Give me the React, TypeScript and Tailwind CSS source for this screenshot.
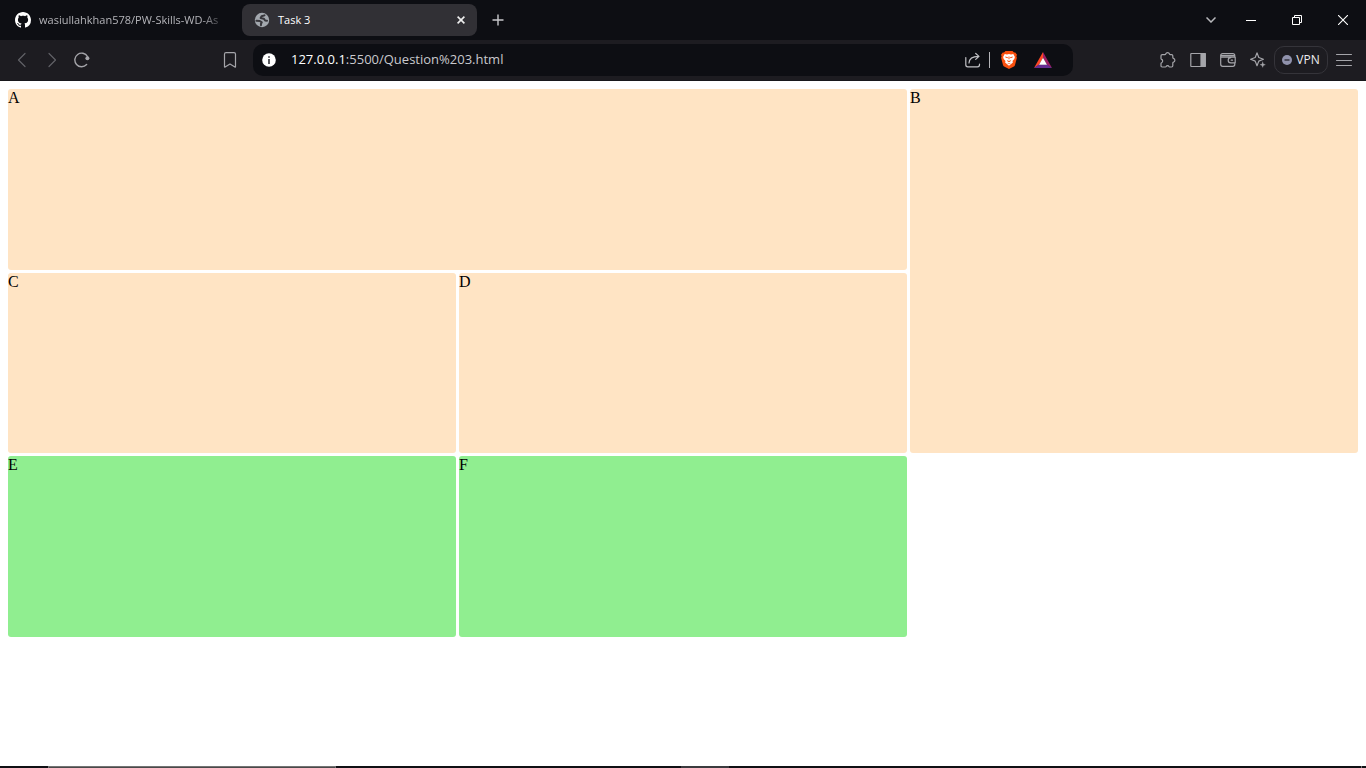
import React from "react";

const cells = [
  { name: "A", className: "col-span-2 bg-[#ffe4c4]" },
  { name: "B", className: "row-span-2 bg-[#ffe4c4]" },
  { name: "C", className: "bg-[#ffe4c4]" },
  { name: "D", className: "bg-[#ffe4c4]" },
  { name: "E", className: "bg-[#90ee90]" },
  { name: "F", className: "bg-[#90ee90]" },
];

function IconButton({
  label,
  className = "",
  children,
}: {
  label: string;
  className?: string;
  children: React.ReactNode;
}) {
  return (
    <button
      type="button"
      aria-label={label}
      className={`flex h-8 shrink-0 items-center justify-center ${className}`}
    >
      {children}
    </button>
  );
}

function Svg({
  size = 16,
  children,
}: {
  size?: number;
  children: React.ReactNode;
}) {
  return (
    <svg
      width={size}
      height={size}
      viewBox={`0 0 ${size} ${size}`}
      fill="none"
      stroke="currentColor"
      strokeWidth="1.2"
      strokeLinecap="round"
      strokeLinejoin="round"
      aria-hidden="true"
    >
      {children}
    </svg>
  );
}

function TabStrip() {
  return (
    <div className="flex h-10 items-center bg-[#0d0e13] text-[11px]">
      <a
        href="#repo"
        className="flex h-8 w-[242px] shrink-0 items-center gap-2 pr-[13px] pl-[15px] text-[#b4b4b9]"
      >
        <svg width="16" height="16" viewBox="0 0 16 16" fill="#fff" className="shrink-0" aria-hidden="true">
          <path d="M8 0C3.58 0 0 3.58 0 8c0 3.54 2.29 6.53 5.47 7.59.4.07.55-.17.55-.38 0-.19-.01-.82-.01-1.49-2.01.37-2.53-.49-2.69-.94-.09-.23-.48-.94-.82-1.13-.28-.15-.68-.52-.01-.53.63-.01 1.08.58 1.23.82.72 1.21 1.87.87 2.33.66.07-.52.28-.87.51-1.07-1.78-.2-3.64-.89-3.64-3.95 0-.87.31-1.59.82-2.15-.08-.2-.36-1.02.08-2.12 0 0 .67-.21 2.2.82.64-.18 1.32-.27 2-.27s1.36.09 2 .27c1.53-1.04 2.2-.82 2.2-.82.44 1.1.16 1.92.08 2.12.51.56.82 1.27.82 2.15 0 3.07-1.87 3.75-3.65 3.95.29.25.54.73.54 1.48 0 1.07-.01 1.93-.01 2.2 0 .21.15.46.55.38A8.01 8.01 0 0 0 16 8c0-4.42-3.58-8-8-8z" />
        </svg>
        <span className="min-w-0 flex-1 [mask-image:linear-gradient(to_right,#000_85%,transparent)] whitespace-nowrap">
          wasiullahkhan578/PW-Skills-WD-As
        </span>
      </a>
      <div className="flex h-8 w-[235px] shrink-0 items-center rounded-lg bg-[#313035] pr-2 pl-3 text-white">
        <svg width="16" height="16" viewBox="0 0 16 16" className="mr-2 shrink-0" aria-hidden="true">
          <circle cx="8" cy="8" r="7.200" fill="#a3a8ae" />
          <g fill="none" stroke="#38373c" strokeWidth="2" strokeLinecap="round" strokeLinejoin="round">
            <path d="M10.500 3.400 7.600 4.300 6.600 6l3.200.7 1.300 1.800 1.900.2" />
            <path d="m2.400 8.800 3.400.2 2 1.300-.9 1.600.1 1.300" />
          </g>
        </svg>
        <span className="flex-1">Task 3</span>
        <IconButton label="Close tab" className="w-4">
          <svg width="8" height="8" viewBox="0 0 8 8" stroke="#eee" strokeWidth="1.600" aria-hidden="true">
            <path d="M.6.600l6.800 6.800M7.400.600.600 7.400" />
          </svg>
        </IconButton>
      </div>
      <IconButton label="New tab" className="ml-[5px] w-8 text-[#c8c8cc]">
        <svg width="12" height="12" viewBox="0 0 12 12" stroke="currentColor" strokeWidth="1.400" aria-hidden="true">
          <path d="M6 .5v11M.5 6h11" />
        </svg>
      </IconButton>
      <div className="flex-1" />
      <IconButton label="Search tabs" className="w-[34px] text-[#b8b8bc]">
        <svg width="10" height="6" viewBox="0 0 10 6" fill="none" stroke="currentColor" strokeWidth="1.500" aria-hidden="true">
          <path d="M.5.5 5 5 9.500.5" />
        </svg>
      </IconButton>
      <div className="flex text-white">
        <IconButton label="Minimise" className="w-[46px]">
          <svg width="10" height="10" viewBox="0 0 10 10" stroke="currentColor" aria-hidden="true">
            <path d="M0 5.500h10" />
          </svg>
        </IconButton>
        <IconButton label="Restore" className="w-[46px]">
          <svg width="10" height="10" viewBox="0 0 10 10" fill="none" stroke="currentColor" aria-hidden="true">
            <path d="M.5 2.500h7v7h-7zM2.500 2.500v-2h7v7h-2" />
          </svg>
        </IconButton>
        <IconButton label="Close window" className="w-[46px]">
          <svg width="10" height="10" viewBox="0 0 10 10" stroke="currentColor" strokeWidth="1.100" aria-hidden="true">
            <path d="m0 0 10 10M10 0 0 10" />
          </svg>
        </IconButton>
      </div>
    </div>
  );
}

function AddressBar() {
  return (
    <div className="flex h-8 min-w-0 flex-1 items-center rounded-[10px] bg-[#0d0e13] pr-[21px] pl-[9px]">
      <button type="button" aria-label="View site information" className="mr-[15px] shrink-0">
        <svg width="14" height="14" viewBox="0 0 14 14" aria-hidden="true">
          <circle cx="7" cy="7" r="6.800" fill="#fff" />
          <path d="M6 3.200h2v1.600H6zM6 6h2v5H6z" fill="#55565b" />
        </svg>
      </button>
      <div
        role="textbox"
        aria-label="Address"
        tabIndex={0}
        className="min-w-0 flex-1 overflow-hidden text-[13px] whitespace-nowrap text-[#c9c9cd]"
      >
        <span className="text-white">127.0.0.1</span>:5500/Question%203.html
      </div>
      <IconButton label="Share this page" className="text-[#c0c0c4]">
        <Svg>
          <path d="M.8 5.500v7.300q0 2 2 2h9.700q2 0 2-2v-.8" />
          <path d="M4 11c.2-4 2.800-6.500 9.500-6.600M10.700 1.500l3.300 2.900-3.300 3" />
        </Svg>
      </IconButton>
      <span className="mx-2 h-4 w-px bg-[#b4b4b8]" />
      <IconButton label="Brave Shields" className="mr-[17px] ml-[3px]">
        <svg width="16" height="18" viewBox="0 0 16 18" aria-hidden="true">
          <path d="M4.500 0h7L13 1.600l1.300-.1L16 3.700l-.6 1.600.5 1.500-1.900 7.200q-.3 1-1.100 1.600L8 18l-4.900-2.400Q2.300 15 2 14L.1 6.800l.5-1.500L0 3.700l1.700-2.200 1.300.1Z" fill="#f9500f" />
          <path d="m3.700 3 2.300.4L8 3l2 .4 2.300-.4 1.600 2.900-.6 2.200-1.800 2 .4 1.500L8 14.700l-3.900-3.100.4-1.500-1.800-2-.6-2.200Z" fill="#fff" />
          <path d="m4.100 5.400 2.900.8-.5 1.100-2-.7ZM11.900 5.400l-2.900.8.5 1.100 2-.7ZM7.500 5.600h1v2.600h-1ZM5.900 8.900 8 10l2.100-1.100-.8 1.600L8 11.200l-1.300-.7ZM6 11.700l2 .9 2-.9-2 1.500Z" fill="#f9500f" />
        </svg>
      </IconButton>
      <IconButton label="Brave Rewards">
        <svg width="18" height="16" viewBox="0 0 18 16" aria-hidden="true">
          <path d="M9 0v6L4.800 13 0 16Z" fill="#ff4724" />
          <path d="m9 0 9 16-4.800-3L9 6Z" fill="#9e1f63" />
          <path d="m0 16 4.800-3.500h8.400L18 16Z" fill="#662d91" />
          <path d="m9 5.800 4 7H5Z" fill="#fff" />
        </svg>
      </IconButton>
    </div>
  );
}

function Toolbar() {
  return (
    <div className="flex h-[41px] items-center border-b border-[#17171b] bg-[#1d1c21] text-[#a5a5aa]">
      <IconButton label="Back" className="ml-[7px] w-[30px] text-[#616166]">
        <Svg><path d="M11 1.500 4.500 8l6.500 6.500" /></Svg>
      </IconButton>
      <IconButton label="Forward" className="w-[30px] text-[#616166]">
        <Svg><path d="M5 1.500 11.500 8 5 14.500" /></Svg>
      </IconButton>
      <IconButton label="Reload" className="w-[30px]">
        <Svg>
          <path d="M12.600 12.600A6.800 6.800 0 1 1 13.500 4.500" strokeWidth="1.400" />
          <circle cx="13.400" cy="6.200" r="2" fill="currentColor" stroke="none" />
        </Svg>
      </IconButton>
      <IconButton label="Bookmark this page" className="mr-[8px] ml-[118px] w-[30px]">
        <Svg>
          <path d="M4 .700h8q1.500 0 1.500 1.500v12.600q0 .6-.6.200L8 12l-4.900 3q-.6.400-.6-.2V2.200Q2.500.700 4 .700Z" />
        </Svg>
      </IconButton>
      <AddressBar />
      <IconButton label="Extensions" className="ml-[80px] w-[30px]">
        <Svg>
          <path d="M2.200 2.600h2.600q.7 0 .9-.6a2 2 0 0 1 3.800 0q.2.600.9.600h1.200q1.200 0 1.200 1.200v1.700q0 .7.700.9a2 2 0 0 1 0 3.800q-.7.200-.7.900v2.700q0 1.200-1.200 1.200H9.700q-.6 0-.8-.6a1.500 1.500 0 0 0-2.700 0q-.2.600-.8.600H2.200Q1 15 1 13.800v-2.200q0-.6.600-.9a1.800 1.800 0 0 0 0-3.300Q1 7.100 1 6.500V3.800q0-1.200 1.200-1.200Z" />
        </Svg>
      </IconButton>
      <IconButton label="Side panel" className="w-[30px]">
        <Svg>
          <rect x=".8" y="1.500" width="14.400" height="13" rx=".5" />
          <path d="M11 1.500h4.200v13H11Z" fill="currentColor" />
        </Svg>
      </IconButton>
      <IconButton label="Wallet" className="w-[30px]">
        <Svg>
          <path d="M14.800 5.200V3.700q0-2-2-2H2.700q-2 0-2 1.700v8.900q0 2 2 2h10.100q2 0 2-2v-1.500M.8 3.600h14M1 5.200h14.200v5.600h-4.400a2.600 2.600 0 0 1 0-5.200M11.200 8.200h1.300" />
        </Svg>
      </IconButton>
      <IconButton label="Leo AI" className="w-[30px]">
        <Svg>
          <path d="M7 .9 8.800 5.500 13.400 7.300 8.800 9.100 7 13.700 5.200 9.100.6 7.300 5.200 5.500Z" />
          <path d="m12.700 10 .7 2 2 .7-2 .7-.7 2-.7-2-2-.7 2-.7Z" fill="currentColor" strokeWidth=".3" />
        </Svg>
      </IconButton>
      <button
        type="button"
        className="ml-px flex h-7 w-[54px] shrink-0 items-center justify-center gap-1 rounded-[10px] border border-[#35343a] text-xs text-[#ededf0]"
      >
        <svg width="10" height="10" viewBox="0 0 10 10" aria-hidden="true">
          <circle cx="5" cy="5" r="5" fill="#9092ac" />
          <path d="M2.500 5h5" stroke="#24242c" strokeWidth="1.300" />
        </svg>
        VPN
      </button>
      <IconButton label="Menu" className="mr-[7px] ml-px w-[30px]">
        <Svg><path d="M.5 2.500h15M.5 8.500h15M.5 13.500h15" strokeWidth="1" /></Svg>
      </IconButton>
    </div>
  );
}

export default function App() {
  return (
    <div className="flex min-h-screen flex-col bg-white">
      <header className="font-['Open_Sans','Noto_Sans',sans-serif]">
        <TabStrip />
        <Toolbar />
      </header>
      <main className="flex-1 p-2 font-['Liberation_Serif',serif] text-base leading-[18px] text-black">
        <div className="grid h-[548px] grid-cols-3 grid-rows-3 gap-[3px]">
          {cells.map((cell) => (
            <div key={cell.name} className={`rounded-[3px] ${cell.className}`}>
              {cell.name}
            </div>
          ))}
        </div>
      </main>
      <footer className="flex h-[2px] bg-[#101014]">
        <div className="ml-12 w-72 border border-b-0 border-[#747474] bg-[#4a4a4a]" />
        <div className="ml-[345px] w-12 bg-[#3b3b3e]" />
        <div className="mr-1 ml-auto w-px bg-[#77777a]" />
      </footer>
    </div>
  );
}
